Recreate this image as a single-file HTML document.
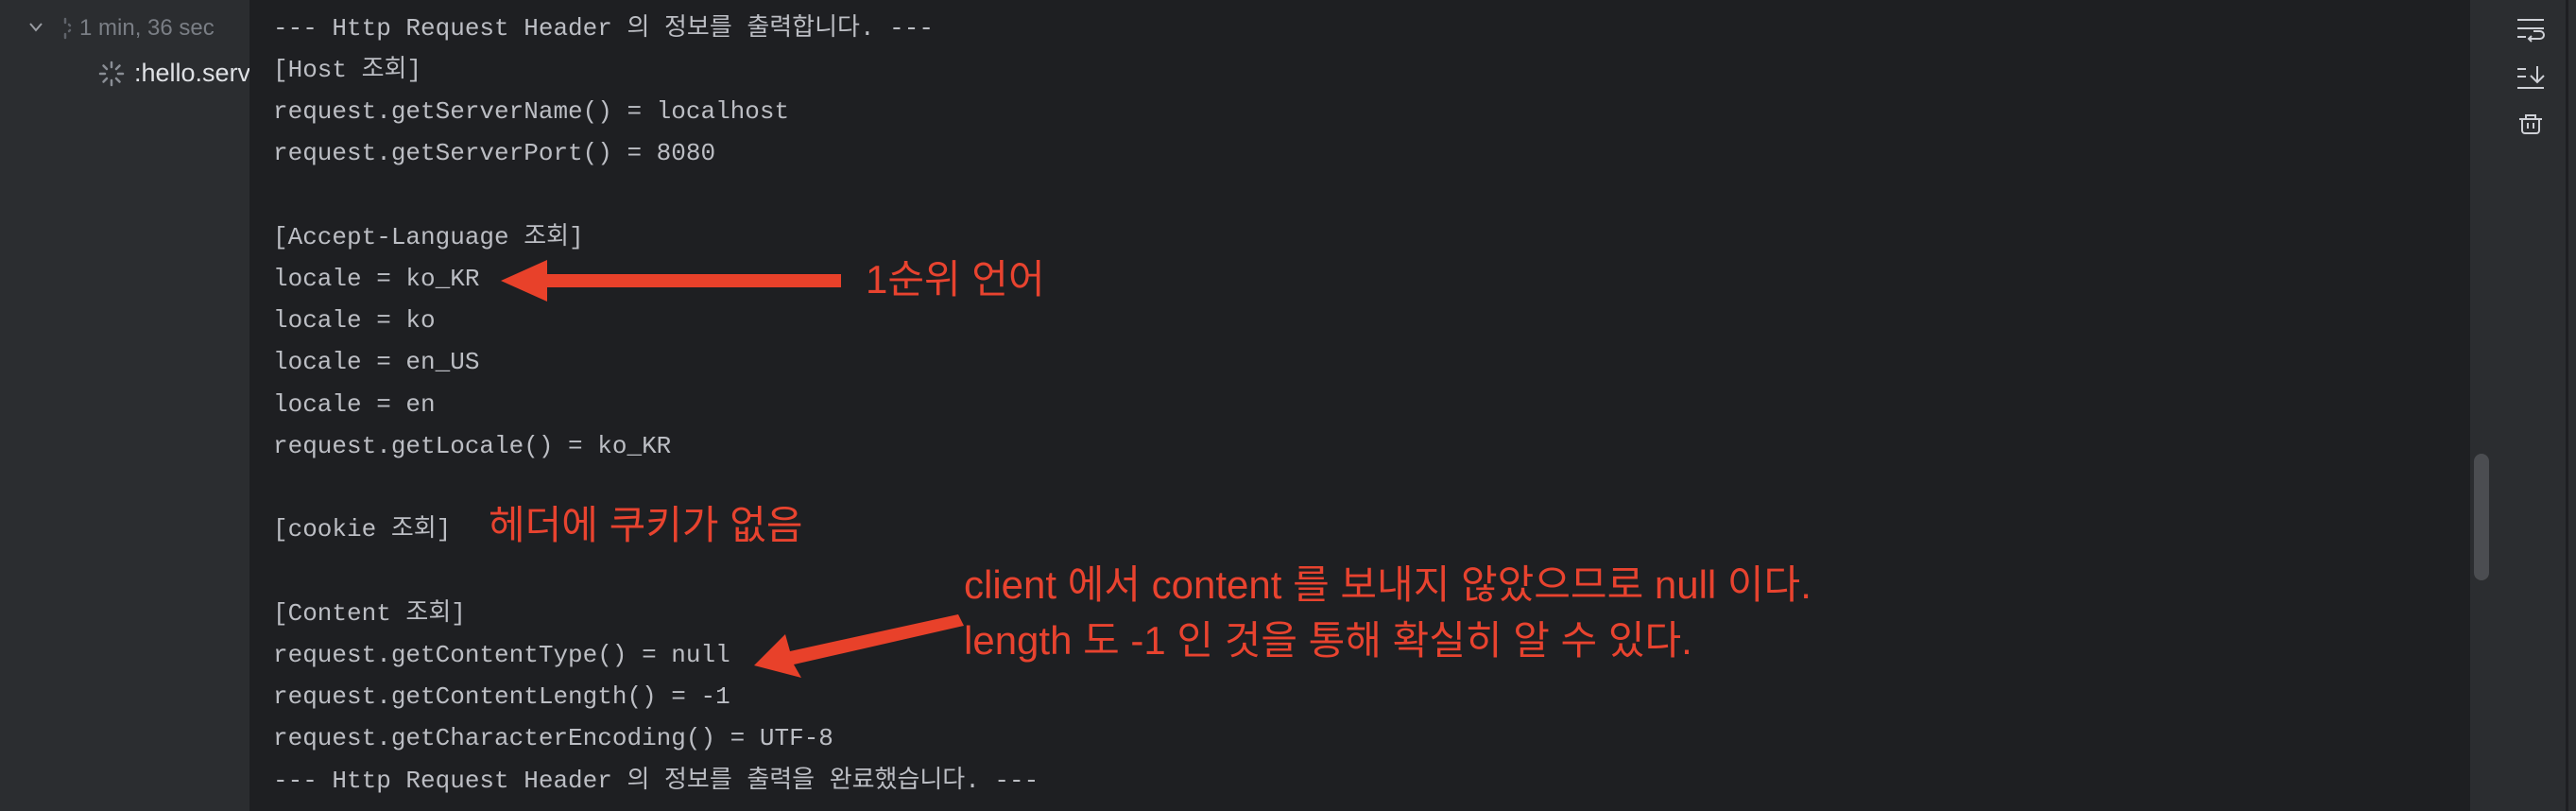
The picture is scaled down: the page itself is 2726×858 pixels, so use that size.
<!DOCTYPE html>
<html><head><meta charset="utf-8"><style>
*{margin:0;padding:0;box-sizing:border-box}
body{width:2726px;height:858px;background:#1e1f22;position:relative;overflow:hidden}
#left{position:absolute;left:0;top:0;width:264px;height:858px;background:#2b2d30;overflow:hidden}
#right{position:absolute;left:2614px;top:0;width:112px;height:858px;background:#2b2d30}
#rb{position:absolute;left:2715px;top:0;width:3px;height:858px;background:#1e1f22}
#sb{position:absolute;left:2618px;top:480px;width:16px;height:134px;border-radius:8px;background:#4b4d51}
.ln{position:absolute;left:289px;font-family:"Liberation Mono","Noto Sans CJK KR",monospace;font-size:26px;color:#bcbec4;white-space:pre;line-height:44px;height:44px}
.ann{position:absolute;font-family:"Liberation Sans","Noto Sans CJK KR",sans-serif;color:#e8432f;white-space:pre;line-height:1}
.lt{position:absolute;font-family:"Liberation Sans",sans-serif;white-space:pre}
</style></head><body>
<div id="left">
<svg style="position:absolute;left:30px;top:22px" width="16" height="14"><path d="M2 3 L8 10 L14 3" stroke="#9a9da3" stroke-width="2" fill="none"/></svg>
<svg style="position:absolute;left:62px;top:18px" width="14" height="24"><g stroke="#5f636a" stroke-width="2.5" stroke-linecap="round"><line x1="7" y1="2" x2="7" y2="6"/><line x1="7" y1="18" x2="7" y2="22"/><line x1="11" y1="8" x2="12" y2="9"/><line x1="11" y1="15" x2="12" y2="14"/></g></svg>
<div class="lt" style="left:84px;top:16px;color:#7a7e85;font-size:24px">1 min, 36 sec</div>
<svg style="position:absolute;left:104px;top:64px" width="28" height="28"><g stroke="#8a8e95" stroke-width="2.5" stroke-linecap="round"><line x1="14" y1="2" x2="14" y2="7"/><line x1="14" y1="21" x2="14" y2="26"/><line x1="2" y1="14" x2="7" y2="14"/><line x1="21" y1="14" x2="26" y2="14"/><line x1="5.5" y1="5.5" x2="9" y2="9"/><line x1="19" y1="19" x2="22.5" y2="22.5"/><line x1="5.5" y1="22.5" x2="9" y2="19"/><line x1="19" y1="9" x2="22.5" y2="5.5"/></g></svg>
<div class="lt" style="left:142px;top:62px;color:#dfe1e5;font-size:27px">:hello.servlet</div>
</div>
<div id="right"></div><div id="rb"></div><div id="sb"></div>
<svg style="position:absolute;left:2663px;top:18px" width="30" height="130" fill="none" stroke="#ced0d6" stroke-width="2">
<line x1="1" y1="3" x2="29" y2="3"/><line x1="1" y1="12" x2="29" y2="12"/><line x1="1" y1="21" x2="10" y2="21"/><path d="M16 26 L13 23 L16 20 M13 23 H25 a4 4 0 0 0 0 -8 H18"/>
<line x1="1" y1="55" x2="10" y2="55"/><line x1="1" y1="63" x2="10" y2="63"/><line x1="1" y1="75" x2="29" y2="75"/><path d="M22 52 V69 M15 62 L22 69 L29 62"/>
<path d="M3 108 H27 M6 108 V120 a3 3 0 0 0 3 3 H21 a3 3 0 0 0 3 -3 V108 M10 108 V104 H20 V108 M12 112 V118 M18 112 V118"/>
</svg>
<div class="ln" style="top:8px">--- Http Request Header 의 정보를 출력합니다. ---</div>
<div class="ln" style="top:52px">[Host 조회]</div>
<div class="ln" style="top:96px">request.getServerName() = localhost</div>
<div class="ln" style="top:140px">request.getServerPort() = 8080</div>
<div class="ln" style="top:229px">[Accept-Language 조회]</div>
<div class="ln" style="top:273px">locale = ko_KR</div>
<div class="ln" style="top:317px">locale = ko</div>
<div class="ln" style="top:361px">locale = en_US</div>
<div class="ln" style="top:406px">locale = en</div>
<div class="ln" style="top:450px">request.getLocale() = ko_KR</div>
<div class="ln" style="top:538px">[cookie 조회]</div>
<div class="ln" style="top:627px">[Content 조회]</div>
<div class="ln" style="top:671px">request.getContentType() = null</div>
<div class="ln" style="top:715px">request.getContentLength() = -1</div>
<div class="ln" style="top:759px">request.getCharacterEncoding() = UTF-8</div>
<div class="ln" style="top:804px">--- Http Request Header 의 정보를 출력을 완료했습니다. ---</div>
<svg style="position:absolute;left:0;top:0" width="2726" height="858">
<polygon points="530,297 579,275 579,290 890,290 890,304 579,304 579,319" fill="#e8412a"/>
<polygon points="1014,650 1020,662 840,703 848,717 798,704 831,671 836,689" fill="#e8412a"/>
</svg>
<div class="ann" style="left:916px;top:275px;font-size:42px">1순위 언어</div>
<div class="ann" style="left:517px;top:535px;font-size:42px">헤더에 쿠키가 없음</div>
<div class="ann" style="left:1020px;top:598px;font-size:42px">client 에서 content 를 보내지 않았으므로 null 이다.</div>
<div class="ann" style="left:1020px;top:657px;font-size:42px">length 도 -1 인 것을 통해 확실히 알 수 있다.</div>
</body></html>
